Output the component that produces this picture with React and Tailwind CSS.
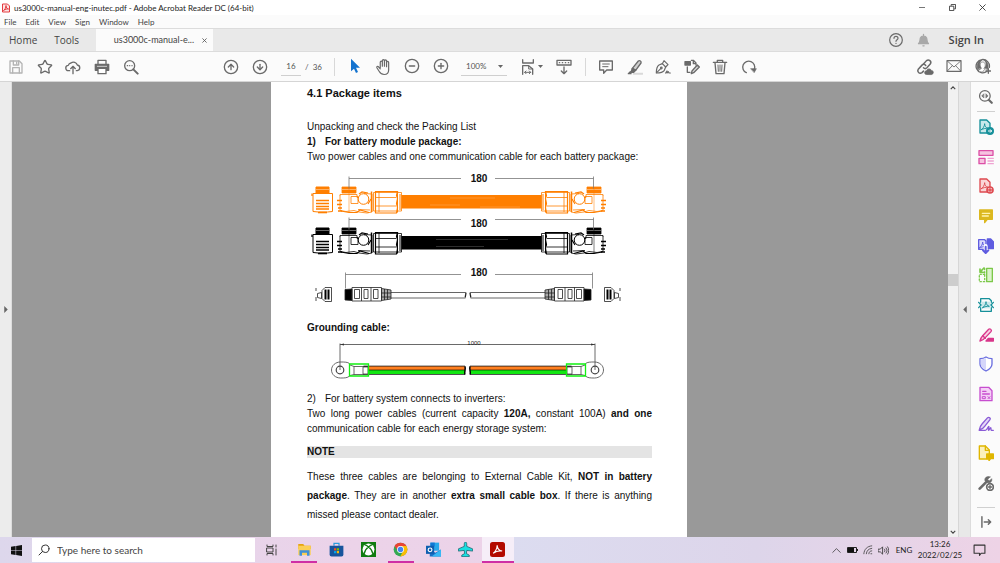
import { useState } from "react";
import { CircleArrowDown, CircleArrowUp, CircleMinus, CirclePlus, Star } from "lucide-react";

const GRAY = "#6a6a6a";

const Icon = ({ children, className = "size-4", color = GRAY, width = 2 }) => (
  <svg
    viewBox="0 0 24 24"
    className={className}
    fill="none"
    stroke={color}
    strokeWidth={width}
    strokeLinecap="round"
    strokeLinejoin="round"
    aria-hidden="true"
  >
    {children}
  </svg>
);

const lucideProps = { className: "size-4", color: GRAY, strokeWidth: 2 };

/* ---------- toolbar icons ---------- */

const SaveIcon = () => (
  <Icon color="#b4b4b4">
    <path d="M3 3h14l4 4v14H3z" />
    <path d="M8 3v6h8V3M7 21v-8h10v8" />
    <path d="M13 4.5v3" />
  </Icon>
);

const CloudUpIcon = () => (
  <Icon>
    <path d="M7 17.5H5.5a4 4 0 0 1-.6-8A5 5 0 0 1 9 6a6 6 0 0 1 9.5 3A4.3 4.3 0 0 1 18.500 17.500H17" />
    <path d="M12 22V11.500M8.500 14.500l3.500-3.500 3.500 3.500" />
  </Icon>
);

const PrintIcon = () => (
  <Icon>
    <path d="M6 7V2h12v5" />
    <path d="M2 8h20v9H2z" fill={GRAY} />
    <path d="M6 14h12v8H6z" fill="#fff" />
    <path d="M5 11h14" stroke="#fff" strokeWidth="1" />
  </Icon>
);

const SearchIcon = () => (
  <Icon>
    <circle cx="10" cy="10" r="7.500" />
    <path d="M15.500 15.500L22 22" strokeWidth="3" />
    <path d="M6.500 10h.5M10 10h.1M13.500 10h.1" />
  </Icon>
);

const PointerIcon = () => (
  <Icon color="none">
    <path d="M6 1v19l4.500-4 3 6.500 3-1.500-3-6.500h6z" fill="#1473cf" />
  </Icon>
);

const HandIcon = () => (
  <Icon className="size-[18px]" width={1.6}>
    <path d="M7 13V5.500a1.400 1.400 0 0 1 2.800 0V11 3.500a1.400 1.400 0 0 1 2.800 0V11 4a1.400 1.400 0 0 1 2.800 0v7.500V6a1.400 1.400 0 0 1 2.800 0v10c0 4-2.500 6-6 6-3.500 0-5-1.500-6.500-4L2.500 13c-.6-1.500 1-2.500 2.200-1.300L7 14.500" />
  </Icon>
);

const FitWidthIcon = () => (
  <Icon>
    <path d="M4 1v5h16V1" />
    <path d="M4 23V10h9l6 5v8" />
    <path d="M13 10v5h6M7 20h9M9 18l-2 2 2 2M14 18l2 2-2 2" strokeWidth="1.500" />
  </Icon>
);

const ReadModeIcon = () => (
  <Icon>
    <path d="M1.500 2h21v7h-21z" />
    <path d="M5 5.500h.5M9.500 5.500h.5M14 5.500h.5M18.500 5.500h.5" />
    <path d="M12 12v10M8 18l4 4 4-4" />
  </Icon>
);

const CommentIcon = () => (
  <Icon>
    <path d="M2.500 3h19v13.500H13l-4.500 5v-5h-6z" />
    <path d="M7 7.500h10M7 11.500h8" strokeWidth="1.500" />
  </Icon>
);

const HighlightIcon = () => (
  <Icon>
    <path d="M10 22h13" stroke="#d9d9d9" strokeWidth="3" />
    <path d="M17 3c2-1.500 5 .5 4 3l-8 11-5-3z" fill="#d0d0d0" />
    <path d="M8 14l5 3-3 3H6z" fill={GRAY} />
    <path d="M5 19l-3 3h4z" fill={GRAY} />
  </Icon>
);

const SignIcon = () => (
  <Icon width={1.800}>
    <path d="M2 21c0-6 1-10 4-12l5-2 5 5-2 5c-2 3-6 4-12 4z" />
    <path d="M11 7l2.500-4.500 6 6L16 12M2.500 20.500l6-6" />
    <circle cx="9.500" cy="13.500" r="1.200" />
    <path d="M16 21l2-3v3l2-2 1 2h2" />
  </Icon>
);

const StampEditIcon = () => (
  <Icon>
    <path d="M1.500 4h8v5h-8z" fill={GRAY} />
    <path d="M11 2h3l4 4v3M14 2v5h4" />
    <path d="M5 12v8h4" />
    <path d="M20 9l3 3-8.500 8.500L11 22l1-4z" fill="#ddd" />
  </Icon>
);

const TrashIcon = () => (
  <Icon>
    <path d="M2 5h20M8 5V2h8v3" />
    <path d="M4.500 5.500L6 22h12l1.500-16.500" />
    <path d="M9 9l.5 9.500M12 9v9.500M15 9l-.5 9.500" strokeWidth="1.500" />
  </Icon>
);

const RedoIcon = () => (
  <Icon>
    <path d="M8 20.500A9 9 0 1 1 20 15.500" />
    <path d="M15 14.500h8L20 20z" fill={GRAY} strokeWidth="1" />
  </Icon>
);

const LinkCloudIcon = () => (
  <Icon className="size-[18px]">
    <path d="M10 8l4-4.500c3-2.500 7.500 1 5 4.500l-4.500 5c-1.500 1.500-3.500 1-4.500 0" />
    <path d="M13 10c-1.500-2-3.500-2-5-.5L3 15c-2 3 1.500 7 5 4.500l2-2" />
    <path d="M14 22a2.500 2.500 0 0 1 0-5 3.500 3.500 0 0 1 6.500-.5A2.800 2.800 0 0 1 21 22z" fill={GRAY} strokeWidth="1" />
  </Icon>
);

const MailIcon = () => (
  <Icon width={1.800}>
    <path d="M1.500 4h21v16h-21z" />
    <path d="M2 4.500l10 9 10-9M2 19.500l7.500-8M22 19.500l-7.500-8" strokeWidth="1.300" />
  </Icon>
);

const AddUserIcon = () => (
  <Icon>
    <path d="M18 20a10 10 0 1 1 3.500-6" />
    <path d="M5 19c1-2.500 3.500-2 4.500-3.500-3-3-2.500-9.500 2-9.500s5 6.500 2 9.500l1 1.500-3 4c-3 0-5-1-6.500-2z" fill="#fff" strokeWidth="1" />
    <path d="M4 17C2 12 4 4 10 3.500 6 7 7 12 9 15zM19 17c2-5 0-12-5-13.500 4 4 3 8.500.5 11.500z" fill={GRAY} strokeWidth="1" />
    <path d="M20 16v7M16.500 19.500h7" />
  </Icon>
);

const Caret = () => (
  <svg viewBox="0 0 10 6" className="h-[3px] w-[5px]" aria-hidden="true">
    <path d="M0 0h10L5 6z" fill="#666" />
  </svg>
);

/* ---------- right pane tools ---------- */

const Trefoil = ({ color, x = 0, y = 0 }) => (
  <path
    transform={`translate(${x} ${y})`}
    d="M5 16c2-1 5-5 5-9 0 4 2 6 5 7-3-.5-7 .5-10 2z"
    stroke={color}
    strokeWidth="1.400"
  />
);

const tools = [
  {
    name: "Export PDF",
    art: (
      <Icon color="#16909a">
        <path d="M3 1.500h10l5 5V21H3z" fill="#c9e8ea" />
        <Trefoil color="#16909a" />
        <circle cx="18" cy="18" r="5" fill="#16909a" />
        <path d="M15.500 18h4.500M18.500 16l2 2-2 2" stroke="#fff" strokeWidth="1.500" />
      </Icon>
    ),
  },
  {
    name: "Organize Pages",
    art: (
      <Icon color="#dc4fa6">
        <path d="M1.500 2.500h21v7h-21z" fill="#f6c3e0" />
        <path d="M1.500 14h9v8h-9z" fill="#f6c3e0" />
        <path d="M15 14h8M15 18h8M15 22h8" stroke="#efa4d2" />
      </Icon>
    ),
  },
  {
    name: "Create PDF",
    art: (
      <Icon color="#de4a50">
        <path d="M3 1.500h10l5 5V21H3z" fill="#fad5d6" />
        <Trefoil color="#de4a50" />
        <circle cx="18" cy="18" r="4.500" fill="#fff" strokeWidth="2.500" />
        <path d="M15.500 18h5M18 15.500v5" />
      </Icon>
    ),
  },
  {
    name: "Comment",
    art: (
      <Icon color="#dcb81f">
        <path d="M2.500 3h19v14H14l-4 5v-5H2.500z" fill="#dcb81f" />
        <path d="M6.500 8h11M6.500 12h9" stroke="#fff3b0" />
      </Icon>
    ),
  },
  {
    name: "Combine Files",
    art: (
      <Icon color="#5f5ce0">
        <path d="M14 1.500h5l4 4V16h-9z" fill="#5f5ce0" />
        <path d="M1 2.500h9l2 2V17H1z" fill="#dddcfb" />
        <Trefoil color="#5f5ce0" x={-3} y={-1} />
        <path d="M11.500 12v10" stroke="#fff" strokeWidth="6" />
        <path d="M11.500 13v9M7.500 18.500l4 4 4-4" strokeWidth="3" />
      </Icon>
    ),
  },
  {
    name: "Compress PDF",
    art: (
      <Icon color="#7cc84a">
        <path d="M13 2h8.500v20H13z" fill="#dcf3cd" />
        <path d="M10 11H2v11h8" strokeDasharray="2 3" />
        <path d="M9 1.500L4 6.500M3 3v5h5" strokeWidth="2.500" />
        <path d="M10 2v20" strokeDasharray="2 3" />
      </Icon>
    ),
  },
  {
    name: "Scan and OCR",
    art: (
      <Icon color="#16909a">
        <path d="M4 8V2.500h13l3 3V8M4 16v5.500h16V16" />
        <path d="M5 7h14v10H5z" fill="#c9e8ea" stroke="none" />
        <Trefoil color="#16909a" x={2} />
        <path d="M1 8l3.500 4L1 16M23 8l-3.500 4 3.500 4" />
      </Icon>
    ),
  },
  {
    name: "Redact",
    art: (
      <Icon color="#d9368b">
        <path d="M3 21c1-5 2-6 4-8L16 3.500c2-2 5.500 1 3.500 3.500L11 16c-2 2.500-4 4-8 5z" fill="#f8cfe2" />
        <path d="M7 13l4 4" />
        <path d="M12 21l3.500-4H23v4z" fill="#d9368b" />
      </Icon>
    ),
  },
  {
    name: "Protect",
    art: (
      <Icon color="#6b6fe0">
        <path d="M12 1.500c3 2 6 2.500 9 2.500v8c0 5-4 8-9 10.500C7 20 3 17 3 12V4c3 0 6-.5 9-2.500z" fill="#fff" />
        <path d="M12 3c-2 1.500-5 2-8 2v7c0 4 3 7 8 9z" fill="#d5d6fa" stroke="none" />
      </Icon>
    ),
  },
  {
    name: "Prepare Form",
    art: (
      <Icon color="#c74ecf">
        <path d="M3 2h13l5 5v15H3z" fill="#f4d0f6" />
        <path d="M7 8h5M7 12h10" />
        <path d="M7 16h4v3H7zM15 16l3 3M18 16l-3 3" strokeWidth="1.500" />
      </Icon>
    ),
  },
  {
    name: "Fill & Sign",
    art: (
      <Icon color="#8a5bd6">
        <path d="M2 21c1-5 2-7 4-9L14.500 2.500c2-1.500 5 1 3.500 3L10 15.500C8 18.500 6 20 2 21z" fill="#e5d8f8" />
        <path d="M2 21.500h9c3 0 4-6 5-6s-1 6 0 6 2-4 3-4 0 4 1 4h3" />
      </Icon>
    ),
  },
  {
    name: "Send for Comments",
    art: (
      <Icon color="#e0b600">
        <path d="M2 1.500h9l6 6V21H2z" fill="#fbf0bc" />
        <path d="M11 1.500V8h6" />
        <path d="M13 13.500h10v7h-4l-2.500 3v-3H13z" fill="#e0b600" />
      </Icon>
    ),
  },
  {
    name: "More Tools",
    art: (
      <Icon>
        <path d="M2.500 20.500l9-9" strokeWidth="4" />
        <path d="M18 3l-3.500 3.500 2.500 2.500L20.500 5.500c1 3-1 6.500-5 6-4 0-6-3-5-6C11.500 3 15 1.500 18 3z" fill={GRAY} strokeWidth="1" />
        <circle cx="18" cy="18" r="5" fill="#fff" strokeWidth="2.500" />
        <path d="M15.500 18h5M18 15.500v5" />
      </Icon>
    ),
  },
];

/* ---------- manual drawings ---------- */

const PowerPlug = ({ color }) => (
  <g stroke={color} fill="none" strokeWidth="0.8">
    <path d="M342 187h14v6h-14z" fill={color} />
    <path d="M342 189.500h14" stroke="#fff" strokeWidth="0.400" />
    <path d="M340 196v-1.500h17v3h4l3-4 8 .5v18l-5 1-8-1-5-1.500-8 1-6-1v-15" />
    <path d="M349 187v25" strokeWidth="0.500" />
    <path d="M351 196.500h7v7h-7zM358 209.500l12 .5" />
    <path d="M341 211l8 1.500h8l3-2.500 9 2.500" strokeWidth="1.200" />
    <path d="M337 200.500h5M337 204.500h5M338 208h4M338 211h4" strokeWidth="1.600" />
    <circle cx="363.500" cy="199" r="5.300" fill="#fff" strokeWidth="1" />
    <path d="M359 194l3-2 6 1M368 204l3-5" strokeWidth="1.200" />
    <path d="M371.500 191.500v20.500" strokeWidth="1.500" />
    <path d="M373.500 192.500h28v18.500h-28z" fill="#fff" />
    <path d="M375.500 191.500h22l-1 4 1 3-1 5 1 4-1 5.500h-21z" strokeWidth="1.200" />
    <path d="M376 197.500h20M376 206h20M379 192v20" />
    <path d="M397.500 191v21.500M400 194v16" strokeWidth="1" />
  </g>
);

const PowerCable = ({ color, y, streak }) => (
  <g transform={`translate(0 ${y})`}>
    <g stroke={color} fill="none" strokeWidth="1">
      <path d="M316 187h13v6h-13z" fill={color} />
      <path d="M313 193.500h19.500v18l-5 .5h-9l-5.500-.5z" />
      <path d="M312 196v-2.500M316 200.500h13M316 203.500h13M316 206.500h13M316 209h13" strokeWidth="1.300" />
      <path d="M318 212.500h9" strokeWidth="1.600" />
      <path d="M316 189.500h13" stroke="#fff" strokeWidth="0.400" />
    </g>
    <rect x="401" y="195" width="141" height="13.500" fill={color} />
    <path d={streak} stroke="#fff" strokeOpacity="0.300" strokeWidth="0.600" />
    <PowerPlug color={color} />
    <g transform="translate(943 0) scale(-1 1)">
      <PowerPlug color={color} />
    </g>
  </g>
);

const RjPlug = () => (
  <g stroke="#222" fill="none" strokeWidth="0.800">
    <path d="M316 288v3M316 297v4M317.500 293.500l4-1v6l-4-1zM322 290.500v8M322 290.500l3-3h6.500v14H325l-3-3" />
    <path d="M325.500 289.500v10M328.500 289.500v10" strokeWidth="2" stroke="#000" />
    <path d="M345 289.500l7-.5v11.500l-7-.5z" fill="#000" />
    <path d="M352 287.500h29.500v13.500H352zM361.500 287.500v13.500M371 287.500v13.500" />
    <path d="M354.500 289.500h5v9h-5zM364 289.500h4v9h-4zM373.500 289.500h4.500v9h-4.500z" />
    <path d="M381.500 288.500l9.500 1.500v9l-9.500 1.500z" fill="#aaa" />
    <path d="M384.500 289v11M387.500 289.500v10M381.500 293h9.500M381.500 297h9.500" />
    <path d="M391 292.500h74.500M391 298h74.500" strokeWidth="0.700" />
    <path d="M465.500 292.500c1.500 1.500-1 3 0 5" strokeWidth="1.300" />
  </g>
);

const Dim = ({ x1, x2, y, drop, textY }) => (
  <g>
    <path
      d={`M${x1} ${y + drop}V${y - 2}M${x1} ${y}H461M495 ${y}H${x2}M${x2} ${y - 2}V${y + drop}`}
      stroke="#777"
      strokeWidth="0.800"
      fill="none"
    />
    <text x="479" y={textY} textAnchor="middle" fontSize="10" fontWeight="bold" fill="#111">
      180
    </text>
  </g>
);

const CableDrawing = () => (
  <svg viewBox="307 168 345 140" className="block w-full" role="img" aria-label="Power and communication cables">
    <PowerCable color="#ff7f00" y={0} streak="M450 198h45M430 205h30M480 207h40" />
    <PowerCable color="#000" y={41} streak="M436 198.500h72M436 205.500h48" />
    <Dim x1={349} x2={593.5} y={178.5} drop={10} textY={182} />
    <Dim x1={349} x2={593.5} y={219.5} drop={10} textY={227} />
    <Dim x1={345.500} x2={592.5} y={274.5} drop={14} textY={276} />
    <RjPlug />
    <g transform="translate(936 0) scale(-1 1)">
      <RjPlug />
    </g>
  </svg>
);

const Lug = () => (
  <g fill="none" stroke="#444" strokeWidth="0.800">
    <path d="M349.500 363.500c-2-1.500-5-1.500-9-1.500-5 0-9 3.500-9 8s4 8 9 8c4 0 7 0 9-2" />
    <circle cx="340" cy="370" r="3.800" strokeWidth="1.200" />
    <path d="M350 365l4 1.500h10v8h-10l-4 1M354 366.500v8" />
    <path d="M363.500 366h101.500v8.500H363.500z" fill="#000" />
    <rect x="363" y="367" width="5" height="7" fill="#fff" />
    <rect x="368" y="366.500" width="96.500" height="3.200" fill="#ff7f1f" stroke="none" />
    <rect x="368" y="370.300" width="96.500" height="3.700" fill="#12e612" stroke="none" />
    <path d="M349.500 364h19v12h-19z" stroke="#12f012" strokeWidth="1.300" />
    <path d="M465 366.500c1.500 3-1.500 5 0 8" stroke="#000" strokeWidth="1.200" />
  </g>
);

const GroundDrawing = () => (
  <svg viewBox="307 335 345 46" className="block w-full" role="img" aria-label="Grounding cable">
    <path d="M340 370v-26.500M340 344.500h255M595 370v-26.500" stroke="#444" strokeWidth="0.800" fill="none" />
    <path d="M340 344.500l4-1v2zM595 344.500l-4-1v2z" fill="#333" />
    <text x="474" y="345" textAnchor="middle" fontSize="6" fill="#222">
      1000
    </text>
    <Lug />
    <g transform="translate(935 0) scale(-1 1)">
      <Lug />
    </g>
  </svg>
);

/* ---------- windows ---------- */

const TitleBar = () => (
  <header className="flex h-[15px] shrink-0 items-center bg-white pl-[2px]">
    <svg viewBox="0 0 16 18" className="mr-1 h-[10px] w-2" fill="none" stroke="#e0282e" strokeWidth="1.800" aria-hidden="true">
      <path d="M1 1h10l4 4v12H1z" fill="#fde4e4" />
      <path d="M3 14c3-2 5-6 5-10 0 5 2 6 5 7-3-.5-6 0-10 3z" />
    </svg>
    <h1 className="flex-1 text-[8px] leading-3 text-[#222]">
      us3000c-manual-eng-inutec.pdf - Adobe Acrobat Reader DC (64-bit)
    </h1>
    <div className="flex items-center pr-[3px]">
      <button aria-label="Minimize" className="flex w-[30px] justify-center">
        <span className="h-px w-[6px] bg-[#777]" />
      </button>
      <button aria-label="Restore" className="flex w-[30px] justify-center">
        <svg viewBox="0 0 8 8" className="size-[7px]" fill="none" stroke="#333" aria-hidden="true">
          <path d="M.5 2.500h5v5h-5zM2.500 2V.5h5v5H6" />
        </svg>
      </button>
      <button aria-label="Close" className="flex w-[30px] justify-center">
        <svg viewBox="0 0 8 8" className="size-[7px]" stroke="#333" aria-hidden="true">
          <path d="M.5.5l7 7M7.500.5l-7 7" />
        </svg>
      </button>
    </div>
  </header>
);

const menus = ["File", "Edit", "View", "Sign", "Window", "Help"];

const MenuBar = () => (
  <nav className="flex h-[13px] shrink-0 items-center gap-[9px] bg-[#fbfbfb] pl-1 text-[8px] leading-3 text-[#444]">
    {menus.map((menu) => (
      <button key={menu}>{menu}</button>
    ))}
  </nav>
);

const TabBar = () => (
  <div className="flex h-6 shrink-0 items-stretch border-y border-[#dcdcdc] bg-[#e9e9e9] text-[#444]">
    <button className="pl-[9px] font-['Open_Sans',sans-serif] text-[10px]">Home</button>
    <button className="px-[17px] font-['Open_Sans',sans-serif] text-[10px]">Tools</button>
    <div className="flex w-[117px] items-center justify-end gap-2 bg-[#fbfbfb] pr-[6px]">
      <button className="text-[9px]">us3000c-manual-e...</button>
      <button aria-label="Close tab">
        <svg viewBox="0 0 6 6" className="size-[5px]" stroke="#555" aria-hidden="true">
          <path d="M.5.5l5 5M5.500.5l-5 5" />
        </svg>
      </button>
    </div>
    <div className="ml-auto flex items-center pr-4">
      <button aria-label="Help" className="flex w-[27px] justify-center">
        <Icon width={1.800}>
          <circle cx="12" cy="12" r="9.500" />
          <path d="M9 9.500c0-4 6-4 6 0 0 2-3 2.200-3 4.500M12 17v.2" />
        </Icon>
      </button>
      <button aria-label="Notifications" className="flex w-[27px] justify-center">
        <Icon color="#a8a8a8" className="size-[15px]">
          <path d="M12 2v2M4 17c3-2 2-6 3-9 1.500-4 8.500-4 10 0 1 3 0 7 3 9zM11 20.500h2" fill="#a8a8a8" />
        </Icon>
      </button>
      <button className="ml-3 font-['Open_Sans',sans-serif] text-[11px] font-semibold">Sign In</button>
    </div>
  </div>
);

const ToolGroup = ({ items, className }) => (
  <div className={`flex ${className}`}>
    {items.map(([label, icon]) => (
      <button key={label} aria-label={label} className="flex flex-1 justify-center">
        {icon}
      </button>
    ))}
  </div>
);

const Divider = () => <span className="h-[18px] w-px bg-[#d8d8d8]" />;

const Toolbar = () => {
  const [page, setPage] = useState("16");
  const [zoom, setZoom] = useState("100%");

  return (
    <div className="flex h-[30px] shrink-0 items-center border-b border-[#d5d5d5] bg-[#fbfbfb] pl-[2px] text-[8px] text-[#555]">
      <ToolGroup
        className="w-[143px]"
        items={[
          ["Save", <SaveIcon />],
          ["Star", <Star {...lucideProps} />],
          ["Upload", <CloudUpIcon />],
          ["Print", <PrintIcon />],
          ["Find", <SearchIcon />],
        ]}
      />
      <ToolGroup
        className="ml-[72px] w-[57px]"
        items={[
          ["Previous page", <CircleArrowUp {...lucideProps} />],
          ["Next page", <CircleArrowDown {...lucideProps} />],
        ]}
      />
      <input
        aria-label="Page number"
        value={page}
        onChange={(e) => setPage(e.target.value)}
        className="ml-[7px] h-[18px] w-5 border-b border-[#cfcfcf] text-center outline-none"
      />
      <span className="ml-1 w-[29px]">/&nbsp; 36</span>
      <Divider />
      <ToolGroup
        className="ml-[6px] w-[114px]"
        items={[
          ["Select", <PointerIcon />],
          ["Pan", <HandIcon />],
          ["Zoom out", <CircleMinus {...lucideProps} />],
          ["Zoom in", <CirclePlus {...lucideProps} />],
        ]}
      />
      <label className="ml-[6px] flex h-[18px] w-[46px] items-center border-b border-[#cfcfcf] pr-1">
        <select
          aria-label="Zoom level"
          value={zoom}
          onChange={(e) => setZoom(e.target.value)}
          className="min-w-0 flex-1 appearance-none pl-[5px] outline-none"
        >
          <option>75%</option>
          <option>100%</option>
          <option>125%</option>
        </select>
        <Caret />
      </label>
      <button aria-label="Fit width" className="ml-[13px] flex items-center gap-[2px]">
        <FitWidthIcon />
        <Caret />
      </button>
      <button aria-label="Read mode" className="mr-[13px] ml-[13px]">
        <ReadModeIcon />
      </button>
      <Divider />
      <ToolGroup
        className="ml-[6px] w-[171px]"
        items={[
          ["Comment", <CommentIcon />],
          ["Highlight", <HighlightIcon />],
          ["Sign", <SignIcon />],
          ["Edit", <StampEditIcon />],
          ["Delete", <TrashIcon />],
          ["Rotate", <RedoIcon />],
        ]}
      />
      <ToolGroup
        className="mr-[3px] ml-auto w-[86px]"
        items={[
          ["Share link", <LinkCloudIcon />],
          ["Email", <MailIcon />],
          ["Add people", <AddUserIcon />],
        ]}
      />
    </div>
  );
};

// one printed line of a justified paragraph
const Line = ({ children }) => (
  <span className="block whitespace-nowrap [text-align-last:justify]">{children}</span>
);

const ManualPage = () => (
  <article className="w-[416px] overflow-hidden bg-white pr-[35px] pl-9 font-['Liberation_Sans',Arial,sans-serif] text-[10px] leading-[15px] text-[#111]">
    <h2 className="pt-1 text-[11px] leading-[15px] font-bold">4.1 Package items</h2>
    <p className="mt-[18px]">Unpacking and check the Packing List</p>
    <p className="font-bold">
      <span className="mr-[9px]">1)</span>For battery module package:
    </p>
    <p className="whitespace-nowrap">Two power cables and one communication cable for each battery package:</p>
    <div className="mt-1">
      <CableDrawing />
    </div>
    <p className="mt-3 font-bold">Grounding cable:</p>
    <GroundDrawing />
    <p className="mt-[10px]">
      <span className="mr-[9px]">2)</span>For battery system connects to inverters:
    </p>
    <p>
      <Line>
        Two long power cables (current capacity <b>120A,</b> constant 100A) <b>and one</b>
      </Line>
      communication cable for each energy storage system:
    </p>
    <h3 className="mt-[10px] bg-[#e4e4e4] leading-3 font-bold">NOTE</h3>
    <p className="mt-[9px] leading-[19px]">
      <Line>
        These three cables are belonging to External Cable Kit, <b>NOT in battery</b>
      </Line>
      <Line>
        <b>package</b>. They are in another <b>extra small cable box</b>. If there is anything
      </Line>
      missed please contact dealer.
    </p>
  </article>
);

const ScrollArrow = ({ up }) => (
  <button aria-label={up ? "Scroll up" : "Scroll down"} className="flex h-[11px] items-center justify-center">
    <svg viewBox="0 0 8 5" className="h-[4px] w-[6px]" fill="none" stroke="#444" strokeWidth="1.500" aria-hidden="true">
      <path d={up ? "M1 4l3-3 3 3" : "M1 1l3 3 3-3"} />
    </svg>
  </button>
);

const Viewer = () => (
  <main className="flex min-h-0 flex-1">
    <button aria-label="Show navigation pane" className="flex w-3 items-center justify-center border-r border-[#ddd] bg-[#ececec]">
      <svg viewBox="0 0 4 8" className="h-[7px] w-1" aria-hidden="true">
        <path d="M0 0l4 4-4 4z" fill="#666" />
      </svg>
    </button>
    <div className="flex min-w-0 flex-1 justify-center overflow-hidden bg-[#999] pr-[2px]">
      <ManualPage />
    </div>
    <div className="flex w-[11px] flex-col border-r border-[#d6d6d6] bg-[#f1f1f1]">
      <ScrollArrow up />
      <div className="grow-[181]" />
      <div className="h-3 bg-[#cdcdcd]" />
      <div className="grow-[241]" />
      <ScrollArrow />
    </div>
    <button aria-label="Hide tools pane" className="flex w-3 items-center justify-center border-r border-[#dcdcdc] bg-[#e8e8e8]">
      <svg viewBox="0 0 4 8" className="h-[7px] w-1" aria-hidden="true">
        <path d="M4 0L0 4l4 4z" fill="#666" />
      </svg>
    </button>
    <aside className="flex w-[29px] flex-col items-center bg-[#fbfbfb]">
      <button aria-label="Find tools" className="flex h-[29px] items-center">
        <Icon className="size-[15px]">
          <circle cx="11" cy="11" r="8.500" />
          <path d="M17.500 17.500L22 22" strokeWidth="3.500" />
          <path d="M9 8l-3 3 3 3zM13 8l3 3-3 3z" fill={GRAY} strokeWidth="1" />
        </Icon>
      </button>
      <span className="h-px w-[18px] bg-[#d0d0d0]" />
      <div className="flex flex-1 flex-col">
        {tools.map((tool) => (
          <button key={tool.name} aria-label={tool.name} className="flex flex-1 items-center">
            {tool.art}
          </button>
        ))}
      </div>
      <span className="mt-[9px] h-px w-[18px] bg-[#d0d0d0]" />
      <button aria-label="Collapse" className="flex h-[29px] items-center pb-[2px]">
        <Icon className="size-[14px]">
          <path d="M5 3v18M9 12h10M16 8l4 4-4 4" strokeWidth="2.500" />
        </Icon>
      </button>
    </aside>
  </main>
);

const apps = [
  {
    name: "File Explorer",
    open: true,
    art: (
      <>
        <path d="M2 3h8l2 3h10v5H2z" fill="#e5a410" />
        <path d="M2 6h20v15H2z" fill="#fbcf56" />
        <path d="M4 22v-9h16v9h-4v-5H8v5z" fill="#3f8fd8" />
      </>
    ),
  },
  {
    name: "Microsoft Store",
    art: (
      <>
        <path d="M8 6V2h8v4" fill="none" stroke="#2c9bdc" strokeWidth="2" />
        <path d="M1 6h22v14a3 3 0 0 1-3 3H4a3 3 0 0 1-3-3z" fill="#17549c" />
        <path d="M8 10h3.500v3.500H8z" fill="#f25022" />
        <path d="M12.500 10H16v3.500h-3.500z" fill="#7fba00" />
        <path d="M8 14.500h3.500V18H8z" fill="#00a4ef" />
        <path d="M12.500 14.500H16V18h-3.500z" fill="#ffb900" />
      </>
    ),
  },
  {
    name: "Xbox",
    art: (
      <>
        <path d="M0 0h24v24H0z" fill="#107c10" />
        <circle cx="12" cy="12" r="9.500" fill="#fff" />
        <path d="M5 19c1-5 4-9 7-11 3 2 6 6 7 11M6 4.500c2 0 4 1.500 6 3.500 2-2 4-3.500 6-3.500" fill="none" stroke="#107c10" strokeWidth="2" />
      </>
    ),
  },
  {
    name: "Chrome",
    open: true,
    art: (
      <>
        <circle cx="12" cy="12" r="11" fill="#34a853" />
        <path d="M2.500 6.500A11 11 0 0 1 21.500 6.500L12 7l-4.300 7.500z" fill="#ea4335" />
        <path d="M21.500 6.500A11 11 0 0 1 11.500 23l4.800-8.500L12 6.500z" fill="#fbbc05" />
        <circle cx="12" cy="12" r="5.500" fill="#fff" />
        <circle cx="12" cy="12" r="4.300" fill="#4285f4" />
      </>
    ),
  },
  {
    name: "Outlook",
    art: (
      <>
        <path d="M7 1h14v13H7z" fill="#28a8ea" />
        <path d="M7 1h7v6H7z" fill="#0f78d4" />
        <path d="M6 12l9 5 9-5v11H6z" fill="#1a6fc4" />
        <path d="M24 12v11H9z" fill="#36b8f5" />
        <path d="M0 6h13v13H0z" fill="#0f5fb0" />
        <circle cx="6.500" cy="12.500" r="3" fill="none" stroke="#fff" strokeWidth="1.800" />
      </>
    ),
  },
  {
    name: "Airplane",
    art: (
      <path
        d="M12 0c1.500 0 2 2 2 4v3l9.500 4v3.500l-9.500-1-.5 5 4.500 2.500v2.500H6V21l4.500-2.500-.5-5-9.500 1V11L10 7V4c0-2 .5-4 2-4z"
        fill="#19dfe0"
        stroke="#175e68"
        strokeWidth="1.200"
      />
    ),
  },
  {
    name: "Acrobat Reader",
    open: true,
    active: true,
    art: (
      <>
        <rect width="24" height="24" rx="4" fill="#b30b00" />
        <path d="M5 18c3-1.500 6.500-7 6.500-13 0 6 3 8.500 8 9.500-5-1-9.500 0-14.500 3.500z" fill="none" stroke="#fff" strokeWidth="1.800" />
      </>
    ),
  },
];

const Taskbar = () => (
  <footer className="flex h-[26px] shrink-0 items-stretch bg-linear-to-r from-[#ddd7ec] via-[#ecd3e9] via-35% to-[#ecd2e6] text-[#222]">
    <button aria-label="Start" className="flex w-8 items-center justify-center">
      <svg viewBox="0 0 12 12" className="size-[11px]" fill="#111" aria-hidden="true">
        <path d="M0 2l5-.8v4.500H0zM5.600 1L12 0v5.700H5.600zM0 6.300h5v4.500L0 10zM5.600 6.300H12V12l-6.400-1z" />
      </svg>
    </button>
    <label className="my-px flex w-[223px] items-center bg-white pl-[6px]">
      <Icon className="size-3" color="#333">
        <circle cx="14.500" cy="9.500" r="7.500" />
        <path d="M9 15l-7 7" />
      </Icon>
      <input
        aria-label="Search"
        placeholder="Type here to search"
        className="ml-[7px] min-w-0 flex-1 text-[10px] outline-none placeholder:text-[#444]"
      />
    </label>
    <button aria-label="Task view" className="flex w-[33px] items-center justify-center">
      <Icon className="size-[12px]" color="#444">
        <path d="M2 2v3h12V2M2 22v-3h12v3M2 8h12v8H2zM20 2v4M20 10v12" />
      </Icon>
    </button>
    <div className="flex w-[226px]">
      {apps.map((app) => (
        <button
          key={app.name}
          aria-label={app.name}
          className={`flex flex-1 flex-col items-center ${app.active ? "bg-[#f6eef8]" : ""}`}
        >
          <span className="flex flex-1 items-center">
            <svg viewBox="0 0 24 24" className="size-[15px]" aria-hidden="true">
              {app.art}
            </svg>
          </span>
          <span className={`h-[2px] ${app.active ? "w-full" : "w-[26px]"} ${app.open ? "bg-[#cf2fa5]" : ""}`} />
        </button>
      ))}
    </div>
    <div className="flex flex-1 items-center justify-end bg-linear-to-r from-[#dcdcf0] via-[#ddd5ea] to-[#eed3e6] pr-[14px] text-[8px]">
      <button aria-label="Show hidden icons" className="flex w-4 justify-center">
        <Icon className="size-[9px]" color="#333">
          <path d="M2 17L12 7l10 10" />
        </Icon>
      </button>
      <button aria-label="Battery" className="flex w-4 justify-center">
        <svg viewBox="0 0 11 6" className="h-[6px] w-[11px]" fill="none" stroke="#222" aria-hidden="true">
          <path d="M.5.5h9v5h-9zM10.500 2v2" />
          <path d="M1 1h6v4H1z" fill="#111" stroke="none" />
        </svg>
      </button>
      <button aria-label="Network" className="flex w-4 justify-center">
        <Icon className="size-[10px]" color="#444">
          <path d="M2 21C3 10 10 3 21 2M8 21c.500-7 5-12 13-13M14 21c0-4 3-7 7-7M19 21h2" />
        </Icon>
      </button>
      <button aria-label="Volume" className="flex w-[15px] justify-center">
        <Icon className="size-[11px]" color="#333" width={1.800}>
          <path d="M1 9h4l5-5v16l-5-5H1zM14 9c1.500 2 1.500 4 0 6M17.500 6.500c3 3.500 3 7.500 0 11M21 4c3.500 5 3.500 11 0 16" />
        </Icon>
      </button>
      <button className="w-[26px] text-center">ENG</button>
      <button className="w-[46px] text-center leading-[11px] whitespace-nowrap">
        13:26
        <br />
        2022/02/25
      </button>
      <button aria-label="Action center" className="ml-[9px] flex w-[14px] justify-center">
        <Icon className="size-[13px]" color="#333">
          <path d="M2 2h20v15h-7l-3 4v-4H2z" />
        </Icon>
      </button>
    </div>
  </footer>
);

export default function App() {
  return (
    <div className="flex h-screen flex-col overflow-hidden font-[Lato,'Open_Sans',sans-serif]">
      <TitleBar />
      <MenuBar />
      <TabBar />
      <Toolbar />
      <Viewer />
      <Taskbar />
    </div>
  );
}
